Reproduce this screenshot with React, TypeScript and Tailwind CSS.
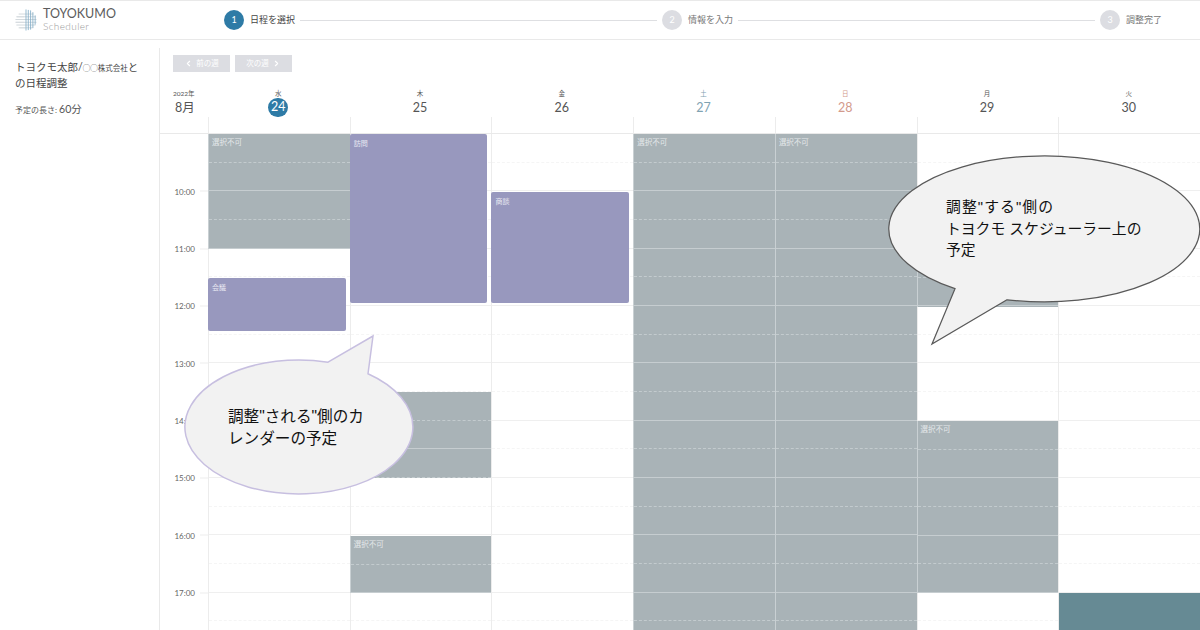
import { ChevronLeft, ChevronRight } from 'lucide-react';

const HOUR = 57.33;
const GRID_TOP = 134;

const days = [
  { week: '水', date: '24', today: true, head: 'text-[#666]' },
  { week: '木', date: '25', head: 'text-[#555]' },
  { week: '金', date: '26', head: 'text-[#555]' },
  { week: '土', date: '27', head: 'text-[#7fa3b2]' },
  { week: '日', date: '28', head: 'text-[#d39a8c]' },
  { week: '月', date: '29', head: 'text-[#555]' },
  { week: '火', date: '30', head: 'text-[#555]' },
];

type Block = { day: number; top: number; bottom: number; kind: 'busy' | 'event' | 'teal'; label?: string };

// y values are page pixels, converted to grid offsets below
const blocks: Block[] = [
  { day: 0, top: 134, bottom: 249, kind: 'busy', label: '選択不可' },
  { day: 0, top: 277.5, bottom: 331, kind: 'event', label: '会議' },
  { day: 1, top: 134, bottom: 303, kind: 'event', label: '訪問' },
  { day: 1, top: 392, bottom: 478, kind: 'busy' },
  { day: 1, top: 536, bottom: 593, kind: 'busy', label: '選択不可' },
  { day: 2, top: 192, bottom: 303, kind: 'event', label: '商談' },
  { day: 3, top: 134, bottom: 650, kind: 'busy', label: '選択不可' },
  { day: 4, top: 134, bottom: 650, kind: 'busy', label: '選択不可' },
  { day: 5, top: 249, bottom: 306.5, kind: 'busy' },
  { day: 5, top: 421, bottom: 593, kind: 'busy', label: '選択不可' },
  { day: 6, top: 593, bottom: 650, kind: 'teal' },
];

const slots = Array.from({ length: 18 }, (_, i) => i);
const hours = ['10:00', '11:00', '12:00', '13:00', '14:00', '15:00', '16:00', '17:00'];

function Logo() {
  return (
    <svg width="22" height="24" viewBox="0 0 24 24" fill="none" className="shrink-0">
      <g stroke="#c3cbd0" strokeWidth="0.8">
        <path d="M4 5.5h16M1.5 8.5h21M0.5 11.5h23M0.5 14.5h23M1.5 17.5h21M4 20.5h16" />
      </g>
      <g stroke="#7fabc6" strokeWidth="0.9">
        <path d="M12 0.5v23M14.5 1v22M17 1.5v21M19.5 3.5v17M22 7v10" />
      </g>
      <path d="M2 8.5h8M1 14.5h9M5 20.5h6" stroke="#d5dade" strokeWidth="0.8" />
    </svg>
  );
}

function Step({ n, label, active }: { n: number; label: string; active?: boolean }) {
  return (
    <div className="flex items-center gap-[6px] shrink-0">
      <div
        className={`w-[20px] h-[20px] rounded-full flex items-center justify-center text-[9px] text-white ${
          active ? 'bg-[#2e7ba6]' : 'bg-[#dcdde2]'
        }`}
      >
        {n}
      </div>
      <span className={`text-[9px] ${active ? 'text-[#444]' : 'text-[#777]'}`}>{label}</span>
    </div>
  );
}

function BusyLines({ count }: { count: number }) {
  return (
    <div className="absolute inset-0 overflow-hidden">
      {Array.from({ length: count }, (_, i) => (
        <div
          key={i}
          className={`h-[28.665px] border-b ${
            i % 2 === 0 ? 'border-dashed border-[#c3cbce]' : 'border-solid border-[#c6cdd0]'
          }`}
        />
      ))}
    </div>
  );
}

function CalendarBlock({ block }: { block: Block }) {
  const top = block.top - GRID_TOP;
  const height = block.bottom - block.top;
  if (block.kind === 'event') {
    return (
      <div
        className="absolute -left-[1px] right-[4px] rounded-[2px] bg-[#9898be] pl-[4px] pt-[3px] text-[7px] leading-[12px] text-[#e8e8f2] z-10"
        style={{ top, height }}
      >
        {block.label}
      </div>
    );
  }
  if (block.kind === 'teal') {
    return <div className="absolute left-0 right-0 bg-[#668a94] z-10" style={{ top, height }} />;
  }
  return (
    <div className="absolute -left-[1px] right-0 border-l border-[#c9d0d3] bg-[#a9b3b7] z-10" style={{ top, height }}>
      <BusyLines count={Math.ceil(height / (HOUR / 2))} />
      {block.label && (
        <div className="relative pl-[3px] pt-[3px] text-[7.5px] leading-[12px] text-[#e4e8ea]">{block.label}</div>
      )}
    </div>
  );
}

export default function App() {
  return (
    <div className="relative w-[1200px] h-[630px] overflow-hidden bg-white font-['Lato','Noto_Sans_CJK_JP',sans-serif] text-[#444]">
      <header className="h-[40px] border-t border-b border-[#e9e9e9] flex items-center">
        <div className="w-[210px] pl-[15px] flex items-center gap-[6px] shrink-0">
          <Logo />
          <div className="flex flex-col -mt-[2px]">
            <span className="text-[12.5px] leading-[13px] text-[#5c5c5c]">TOYOKUMO</span>
            <span className="text-[10px] leading-[12px] tracking-[0.4px] font-light text-[#999]">Scheduler</span>
          </div>
        </div>
        <div className="flex items-center flex-1 pl-[14px] pr-[38px]">
          <Step n={1} label="日程を選択" active />
          <div className="flex-1 h-[1px] bg-[#dedfe2] mx-[5px]" />
          <Step n={2} label="情報を入力" />
          <div className="flex-1 h-[1px] bg-[#dedfe2] mx-[5px]" />
          <Step n={3} label="調整完了" />
        </div>
      </header>

      <div className="flex">
        <aside className="w-[160px] h-[582px] mt-[8px] border-r border-[#e9e9e9] pl-[15px] pr-[18px] pt-[11px] shrink-0">
          <h1 className="text-[10.5px] leading-[16px] text-[#444]">
            トヨクモ太郎/<span className="text-[7.5px] leading-none">◯◯株式会社</span>との日程調整
          </h1>
          <p className="mt-[11px] text-[8px] leading-[16px] text-[#555]">
            予定の長さ: <span className="text-[10.5px] leading-none">60分</span>
          </p>
        </aside>

        <main className="flex-1 min-w-0">
          <div className="h-[48px] pt-[15px] pl-[13px] flex gap-[5px]">
            <button className="w-[57px] h-[17px] bg-[#dcdde2] flex items-center justify-center gap-[3px] text-[7.5px] text-white">
              <ChevronLeft size={9} strokeWidth={3} /> 前の週
            </button>
            <button className="w-[57px] h-[17px] bg-[#dcdde2] flex items-center justify-center gap-[3px] text-[7.5px] text-white">
              次の週 <ChevronRight size={9} strokeWidth={3} />
            </button>
          </div>

          <div className="flex h-[46px] border-b border-[#e9e9e9]">
            <div className="w-[48px] pl-[13px] pt-[1px] shrink-0 text-[#555]">
              <div className="text-[6.5px] leading-[10px]">2022年</div>
              <div className="pl-[2px] text-[12.5px] leading-[18px]">8月</div>
            </div>
            {days.map((d) => (
              <div key={d.date} className="flex-1 flex flex-col">
                <div className={`h-[29px] pt-[1px] pr-[1px] flex flex-col items-center ${d.head}`}>
                  <span className="text-[6.5px] leading-[9px]">{d.week}</span>
                  {d.today ? (
                    <span className="w-[20px] h-[20px] rounded-full bg-[#2e7ba6] text-white text-[12.5px] flex items-center justify-center">
                      {d.date}
                    </span>
                  ) : (
                    <span className="text-[12.5px] leading-[20px]">{d.date}</span>
                  )}
                </div>
                <div className="flex-1 border-l border-[#ececec]" />
              </div>
            ))}
          </div>

          <div className="flex">
            <div className="w-[48px] shrink-0 relative">
              {hours.map((h) => (
                <div key={h} className="h-[57.33px] flex items-end justify-end">
                  <div className="flex items-center translate-y-[5.5px] h-[11px]">
                    <span className="text-[8px] text-[#666] mr-[5px]">{h}</span>
                    <span className="w-[8px] h-[1px] bg-[#eeeeee]" />
                  </div>
                </div>
              ))}
            </div>
            {days.map((d, dayIndex) => (
              <div key={d.date} className="flex-1 relative border-l border-[#ececec]">
                {slots.map((s) => (
                  <div
                    key={s}
                    className={`h-[28.665px] border-b ${
                      s % 2 === 0 ? 'border-dashed border-[#f5f5f5]' : 'border-solid border-[#efefef]'
                    }`}
                  />
                ))}
                {blocks
                  .filter((b) => b.day === dayIndex)
                  .map((b) => (
                    <CalendarBlock key={b.top} block={b} />
                  ))}
              </div>
            ))}
          </div>
        </main>
      </div>

      {/* callouts sit over the calendar */}
      <svg width="1200" height="630" viewBox="0 0 1200 630" className="absolute left-0 top-0 z-20 pointer-events-none">
        <path
          d="M328 362.2 L373 336 L368 373.7 A114 67 0 1 1 328 362.2 Z"
          fill="#f2f2f2"
          stroke="#c7bfe0"
          strokeWidth="1.5"
        />
        <path
          d="M1007 299.8 L932 344 L955 288.7 A155.5 73 0 1 1 1007 299.8 Z"
          fill="#f2f2f2"
          stroke="#595959"
          strokeWidth="1.25"
        />
      </svg>
      <div className="absolute left-[228px] top-[406px] w-[145px] z-30 text-[15.6px] leading-[22px] text-[#111] font-['Liberation_Sans','Noto_Sans_CJK_JP',sans-serif]">
        調整"される"側のカレンダーの予定
      </div>
      <div className="absolute left-[946px] top-[197px] w-[200px] z-30 text-[14.8px] leading-[21.5px] text-[#111] font-['Liberation_Sans','Noto_Sans_CJK_JP',sans-serif]">
        <span className="tracking-[1.1px]">調整"する"側の</span>
        <br />
        トヨクモ スケジューラー上の予定
      </div>
    </div>
  );
}
